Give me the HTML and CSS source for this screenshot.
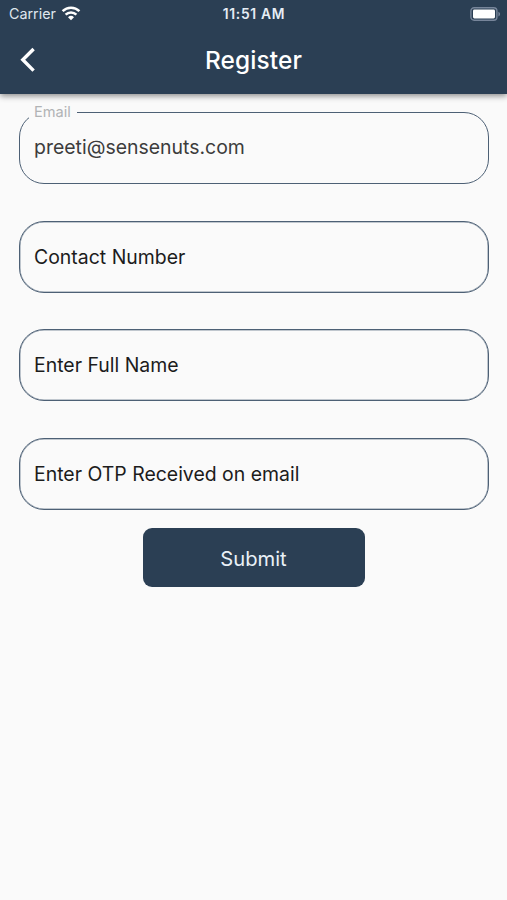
FILE: index.html
```html
<!DOCTYPE html>
<html lang="en">
<head>
    <meta charset="UTF-8">
    <meta name="viewport" content="width=device-width, initial-scale=1.0">
    <title>Register</title>
    <link rel="stylesheet" href="styles.css">
</head>
<body>
    <header class="header">
        <div class="status-bar">
            <div class="carrier">
                <span class="carrier-name">Carrier</span>
                <svg class="wifi" width="20" height="15" viewBox="0 0 20 15" fill="none" stroke="#fff" stroke-width="2.5">
                    <path d="M1.6 5.2a12 12 0 0 1 16.8 0"/>
                    <path d="M4.6 8.6a7.8 7.8 0 0 1 10.8 0"/>
                    <path d="M10 14.2L7 11.2a4.3 4.3 0 0 1 6 0z" fill="#fff" stroke="none"/>
                </svg>
            </div>
            <span class="time">11:51 AM</span>
            <svg class="battery" width="31" height="14" viewBox="0 0 31 14">
                <rect x="0.9" y="0.8" width="26" height="12.4" rx="3.2" fill="none" stroke="#77859a" stroke-width="1.4"/>
                <rect x="3" y="2.6" width="22" height="8.8" rx="1.4" fill="#fff"/>
                <path d="M28.4 4.8c2.2.8 2.2 3.8 0 4.6z" fill="#77859a"/>
            </svg>
        </div>
        <div class="nav-bar">
            <button type="button" class="back" aria-label="Back">
                <svg width="16" height="26" viewBox="0 0 16 26" fill="none" stroke="#fff" stroke-width="3.4">
                    <path d="M13.6 2L2.8 12.8l10.8 10.8"/>
                </svg>
            </button>
            <h1 class="title">Register</h1>
        </div>
    </header>

    <form class="register-form">
        <fieldset class="field field-filled">
            <legend>Email</legend>
            <span class="value">preeti@sensenuts.com</span>
        </fieldset>
        <div class="field">
            <label>Contact Number</label>
        </div>
        <div class="field">
            <label>Enter Full Name</label>
        </div>
        <div class="field">
            <label>Enter OTP Received on email</label>
        </div>
        <button type="button" class="submit">Submit</button>
    </form>
</body>
</html>
```
FILE: styles.css
```css
* {
    box-sizing: border-box;
}
body {
    margin: 0;
    min-height: 900px;
    background-color: #fafafa;
    font-family: Inter, "Liberation Sans", sans-serif;
    color: #1c1c1c;
}
.header {
    height: 94px;
    background-color: #2b3f54;
    color: #fff;
    box-shadow: 0 2px 6px rgba(0, 0, 0, 0.45);
}
.status-bar {
    display: grid;
    grid-template-columns: 1fr auto 1fr;
    align-items: center;
    height: 27px;
    padding: 0 6px 0 9px;
}
.carrier {
    display: flex;
    align-items: center;
    gap: 5px;
}
.carrier-name {
    font-size: 14.3px;
    color: #dfe6ee;
}
.time {
    margin-left: -2px;
    font-size: 13.8px;
    font-weight: 600;
    letter-spacing: 0.7px;
    color: #e6edf4;
}
.battery {
    justify-self: end;
}
.nav-bar {
    display: grid;
    grid-template-columns: 60px 1fr 60px;
    align-items: center;
    height: 66px;
}
.back {
    display: flex;
    padding: 0 0 0 20px;
    border: none;
    background: none;
}
.title {
    margin: 0;
    font-size: 24.4px;
    font-weight: 500;
    letter-spacing: 0.15px;
    text-align: center;
}
.register-form {
    display: flex;
    flex-direction: column;
    gap: 36.6px;
    padding: 18px 18px 0 19px;
}
.field {
    display: flex;
    align-items: center;
    height: 72px;
    margin: 0;
    padding: 0 14px;
    border: 1px solid #4d6075;
    border-radius: 25px;
    font-size: 19.45px;
}
.field:not(.field-filled) {
    box-shadow: inset 0 0 0 0.5px #8593a2;
}
.field-filled {
    display: block;
    height: 80px;
    margin-top: -8px;
    padding: 0 9px;
    color: #3c3c3c;
}
.field-filled legend {
    height: 17px;
    padding: 0 6px 0 5px;
    font-size: 14.6px;
    line-height: 17px;
    color: #b1b3b5;
}
.value {
    display: block;
    padding: 14px 0 0 5px;
    line-height: 24px;
}
.submit {
    align-self: center;
    width: 222px;
    height: 59px;
    margin: -18.2px 1px 0 0;
    padding-top: 2px;
    border: none;
    border-radius: 9px;
    background-color: #2b3f54;
    color: #e9f0f7;
    font-family: inherit;
    font-size: 20.2px;
}
```
